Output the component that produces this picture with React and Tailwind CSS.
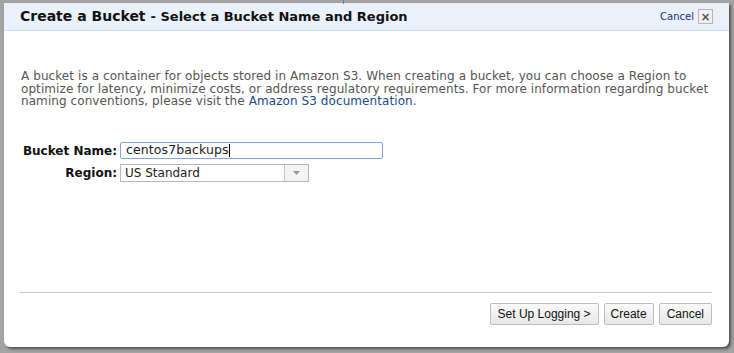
export default function App() {
  return (
    <div className="w-[734px] h-[353px] bg-[#a3a3a3] overflow-hidden relative" style={{ fontFamily: '"DejaVu Sans", Verdana, sans-serif' }}>
      <div className="absolute left-[343px] top-0 w-px h-[4px] bg-[#7a7a7a]" />
      <div className="ml-[4px] mt-[3px] w-[725px] h-[344px] bg-white rounded-b-[6px] shadow-[2px_2px_3px_rgba(0,0,0,0.5)] flex flex-col">
        <div className="h-[28px] bg-[#eaf1fb] border-b border-[#c6dcf2] flex items-center pl-[16px] pr-[16px]">
          <div className="flex items-baseline text-[#111] font-bold">
            <span className="text-[14px]">Create a Bucket</span>
            <span className="text-[13px] ml-[5px]">- Select a Bucket Name and Region</span>
          </div>
          <div className="ml-auto flex items-center gap-[4px]">
            <span className="text-[10px] text-[#1a2f7a]">Cancel</span>
            <span className="w-[15px] h-[15px] border border-[#b5b5b5] bg-[#f0f0f0] flex items-center justify-center text-[#555] text-[12px] leading-none font-bold">×</span>
          </div>
        </div>
        <div className="px-[17px]">
          <p className="mt-[39px] text-[12px] leading-[12.5px] text-[#555] tracking-[0.08px]">
            A bucket is a container for objects stored in Amazon S3. When creating a bucket, you can choose a Region to optimize for latency, minimize costs, or address regulatory requirements. For more information regarding bucket naming conventions, please visit the <span className="text-[#1a4a8a]">Amazon S3 documentation</span>.
          </p>
          <div className="mt-[34px] flex flex-col gap-[4px]">
            <div className="flex items-center">
              <span className="w-[99px] text-right text-[12px] font-bold text-[#111] pr-[3px]">Bucket Name:</span>
              <div className="w-[263px] h-[17px] border border-[#7fa7d8] rounded-[2px] flex items-center pl-[5px] text-[12.5px] tracking-[0.1px] text-[#222]">
                centos7backups<span className="w-px h-[13px] bg-[#000]" />
              </div>
            </div>
            <div className="flex items-center">
              <span className="w-[99px] text-right text-[12px] font-bold text-[#111] pr-[3px]">Region:</span>
              <div className="w-[189px] h-[18px] border border-[#b8b8b8] flex items-stretch text-[12px] text-[#222]">
                <span className="flex-1 flex items-center pl-[4px]">US Standard</span>
                <span className="w-[24px] border-l border-[#c8c8c8] bg-[#f4f4f4] flex items-center justify-center">
                  <svg width="7" height="4" viewBox="0 0 7 4"><path d="M0 0h7L3.5 4z" fill="#999" /></svg>
                </span>
              </div>
            </div>
          </div>
        </div>
        <div className="mt-auto ml-[16px] mr-[17px] border-t border-[#c8c8c8] h-[55px] flex items-start justify-end gap-[5px] pt-[10px]" style={{ fontFamily: '"Liberation Sans", Arial, sans-serif' }}>
          <button className="h-[22px] px-[7px] border border-[#bdbdbd] rounded-[2px] bg-gradient-to-b from-[#fafafa] to-[#e8e8e8] text-[12px] text-[#111]">Set Up Logging &gt;</button>
          <button className="h-[22px] px-[6px] border border-[#bdbdbd] rounded-[2px] bg-gradient-to-b from-[#fafafa] to-[#e8e8e8] text-[12px] text-[#111]">Create</button>
          <button className="h-[22px] px-[7px] border border-[#bdbdbd] rounded-[2px] bg-gradient-to-b from-[#fafafa] to-[#e8e8e8] text-[12px] text-[#111]">Cancel</button>
        </div>
      </div>
    </div>
  );
}
